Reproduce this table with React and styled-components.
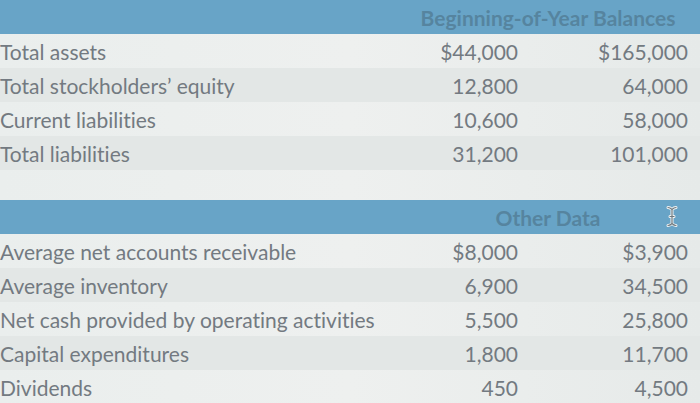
import React from 'react'
import styled, { createGlobalStyle } from 'styled-components'

const GlobalStyle = createGlobalStyle`
  html, body {
    margin: 0;
    padding: 0;
    background: #e9edec;
  }
  body {
    font-family: Lato, "Open Sans", sans-serif;
    font-variant-ligatures: none;
  }
`;

const balanceRows = [
  { label: 'Total assets', a: '$44,000', b: '$165,000' },
  { label: 'Total stockholders\u2019 equity', a: '12,800', b: '64,000' },
  { label: 'Current liabilities', a: '10,600', b: '58,000' },
  { label: 'Total liabilities', a: '31,200', b: '101,000' },
];

const otherRows = [
  { label: 'Average net accounts receivable', a: '$8,000', b: '$3,900' },
  { label: 'Average inventory', a: '6,900', b: '34,500' },
  { label: 'Net cash provided by operating activities', a: '5,500', b: '25,800' },
  { label: 'Capital expenditures', a: '1,800', b: '11,700' },
  { label: 'Dividends', a: '450', b: '4,500' },
];

const Page = styled.div`
  width: 700px;
  height: 403px;
  overflow: hidden;
  background: linear-gradient(90deg, #eaeeed 0%, #eef0ef 50%, #e6eae9 100%);
  color: #737a81;
`;

const HeaderBar = styled.div`
  position: relative;
  display: grid;
  grid-template-columns: 400px 288px;
  height: 34px;
  align-items: center;
  background: #68a4c7;
  color: #56849f;
  font-size: 21px;
  font-weight: 700;
`;

const HeaderTitle = styled.div`
  grid-column: 2;
  text-align: center;
  padding-left: 8px;
`;

const Row = styled.div`
  display: grid;
  grid-template-columns: 400px 118px 170px;
  height: 34px;
  align-items: center;
  font-size: 21px;
  background: ${({ $shade }) => ($shade ? '#e3e7e6' : 'transparent')};
`;

const Label = styled.div`
  white-space: nowrap;
`;

const Num = styled.div`
  text-align: right;
`;

const Spacer = styled.div`
  height: 30px;
`;

const Cursor = styled.svg`
  position: absolute;
  right: 22px;
  top: 5px;
`;

const beamPath =
  'M2 2 C4 2 5 3 6 4 C7 3 8 2 10 2 M6 4 V18 M2 20 C4 20 5 19 6 18 C7 19 8 20 10 20 M4 11 H8';

const IBeam = () => (
  <Cursor width="12" height="23" viewBox="0 0 12 22">
    <path d={beamPath} fill="none" stroke="#f2f4f4" strokeWidth="3" strokeLinecap="round" />
    <path d={beamPath} fill="none" stroke="#6f7a80" strokeWidth="1.2" strokeLinecap="round" />
  </Cursor>
);

const App = () => {
  return (
    <Page>
      <GlobalStyle />
      <HeaderBar>
        <HeaderTitle>Beginning-of-Year Balances</HeaderTitle>
      </HeaderBar>
      {balanceRows.map((r, i) => (
        <Row key={r.label} $shade={i % 2 === 1}>
          <Label>{r.label}</Label>
          <Num>{r.a}</Num>
          <Num>{r.b}</Num>
        </Row>
      ))}
      <Spacer />
      <HeaderBar>
        <HeaderTitle>Other Data</HeaderTitle>
        <IBeam />
      </HeaderBar>
      {otherRows.map((r, i) => (
        <Row key={r.label} $shade={i % 2 === 1}>
          <Label>{r.label}</Label>
          <Num>{r.a}</Num>
          <Num>{r.b}</Num>
        </Row>
      ))}
    </Page>
  )
}

export default App
